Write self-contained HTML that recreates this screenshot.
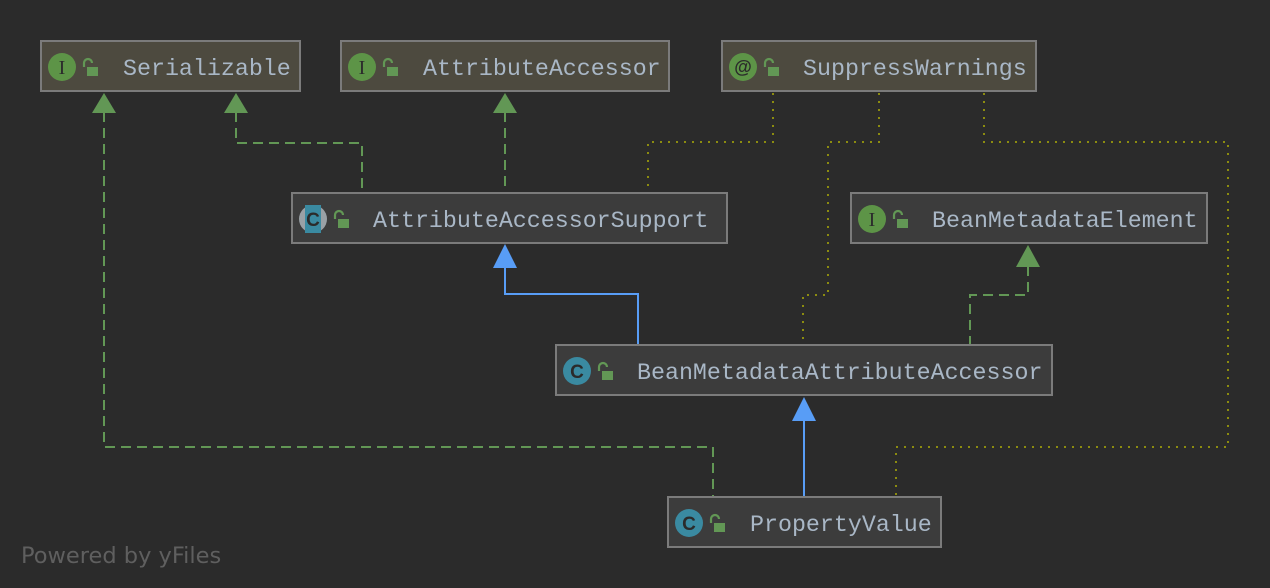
<!DOCTYPE html>
<html><head><meta charset="utf-8"><style>
html,body{margin:0;padding:0;background:#2b2b2b;}
svg{display:block}
text.n{font-family:"Liberation Mono",monospace;font-size:23.3px;fill:#a9b7c6}
text.ic{font-family:"Liberation Serif",serif;fill:#2b2b2b;text-anchor:middle}
text.cc{font-family:"Liberation Sans",sans-serif;fill:#2b2b2b;text-anchor:middle;font-weight:bold}
</style></head><body>
<svg width="1270" height="588" viewBox="0 0 1270 588" xmlns="http://www.w3.org/2000/svg">
<rect width="1270" height="588" fill="#2b2b2b"/>
<defs>
<g id="lock"><path d="M-4,-3 v-4 a4,4 0 0 1 8,0" fill="none" stroke="#629755" stroke-width="2.2"/><rect x="-1" y="-3" width="11" height="9" fill="#629755"/></g>
</defs>
<g fill="none" stroke="#629755" stroke-width="2" stroke-dasharray="10,6">
<path d="M104,112 V447 H713 V497"/>
<path d="M236,112 V143 H362 V193"/>
<path d="M505,112 V193"/>
<path d="M1028,266 V295 H970 V345"/>
</g>
<g fill="none" stroke="#8c8c10" stroke-width="2" stroke-dasharray="2,6">
<path d="M773,93 V142 H648 V193"/>
<path d="M879,93 V142 H828 V295 H803 V345"/>
<path d="M984,93 V142 H1228 V447 H896 V497"/>
</g>
<g fill="none" stroke="#589df6" stroke-width="2">
<path d="M505,266 V294 H638 V345"/>
<path d="M804,418 V497"/>
</g>
<g fill="#629755">
<path d="M104,93 L116,113 H92Z"/>
<path d="M236,93 L248,113 H224Z"/>
<path d="M505,93 L517,113 H493Z"/>
<path d="M1028,245 L1040,267 H1016Z"/>
</g>
<g fill="#589df6">
<path d="M505,244 L517,268 H493Z"/>
<path d="M804,397 L816,421 H792Z"/>
</g>
<g stroke="#7b7b7b" stroke-width="2">
<rect x="41" y="41" width="259" height="50" fill="#4d4a3f"/>
<rect x="341" y="41" width="328" height="50" fill="#4d4a3f"/>
<rect x="722" y="41" width="314" height="50" fill="#4d4a3f"/>
<rect x="292" y="193" width="435" height="50" fill="#3c3c3c"/>
<rect x="851" y="193" width="356" height="50" fill="#3c3c3c"/>
<rect x="556" y="345" width="496" height="50" fill="#3c3c3c"/>
<rect x="668" y="497" width="273" height="50" fill="#3c3c3c"/>
</g>
<g>
<circle cx="62" cy="67" r="14" fill="#5d9447"/><text class="ic" x="62" y="74" font-size="20">I</text><use href="#lock" x="88" y="70"/>
<circle cx="362" cy="67" r="14" fill="#5d9447"/><text class="ic" x="362" y="74" font-size="20">I</text><use href="#lock" x="388" y="70"/>
<circle cx="743" cy="67" r="14" fill="#5d9447"/><text class="cc" x="743" y="73" font-size="18">@</text><use href="#lock" x="769" y="70"/>
<circle cx="313" cy="219" r="14" fill="#9aa1a6"/><rect x="305" y="205" width="16" height="28" fill="#3a8aa1"/><text class="cc" x="313" y="226" font-size="19">C</text><use href="#lock" x="339" y="222"/>
<circle cx="872" cy="219" r="14" fill="#5d9447"/><text class="ic" x="872" y="226" font-size="20">I</text><use href="#lock" x="898" y="222"/>
<circle cx="577" cy="371" r="14" fill="#3a8aa1"/><text class="cc" x="577" y="378" font-size="19">C</text><use href="#lock" x="603" y="374"/>
<circle cx="689" cy="523" r="14" fill="#3a8aa1"/><text class="cc" x="689" y="530" font-size="19">C</text><use href="#lock" x="715" y="526"/>
</g>
<g>
<text class="n" x="123" y="75">Serializable</text>
<text class="n" x="423" y="75">AttributeAccessor</text>
<text class="n" x="803" y="75">SuppressWarnings</text>
<text class="n" x="373" y="227">AttributeAccessorSupport</text>
<text class="n" x="932" y="227">BeanMetadataElement</text>
<text class="n" x="637" y="379">BeanMetadataAttributeAccessor</text>
<text class="n" x="750" y="531">PropertyValue</text>
</g>
<text x="21" y="563" font-family="'DejaVu Sans','Liberation Sans',sans-serif" font-size="22.5" fill="#5f5f5f">Powered by yFiles</text>
</svg>
</body></html>
